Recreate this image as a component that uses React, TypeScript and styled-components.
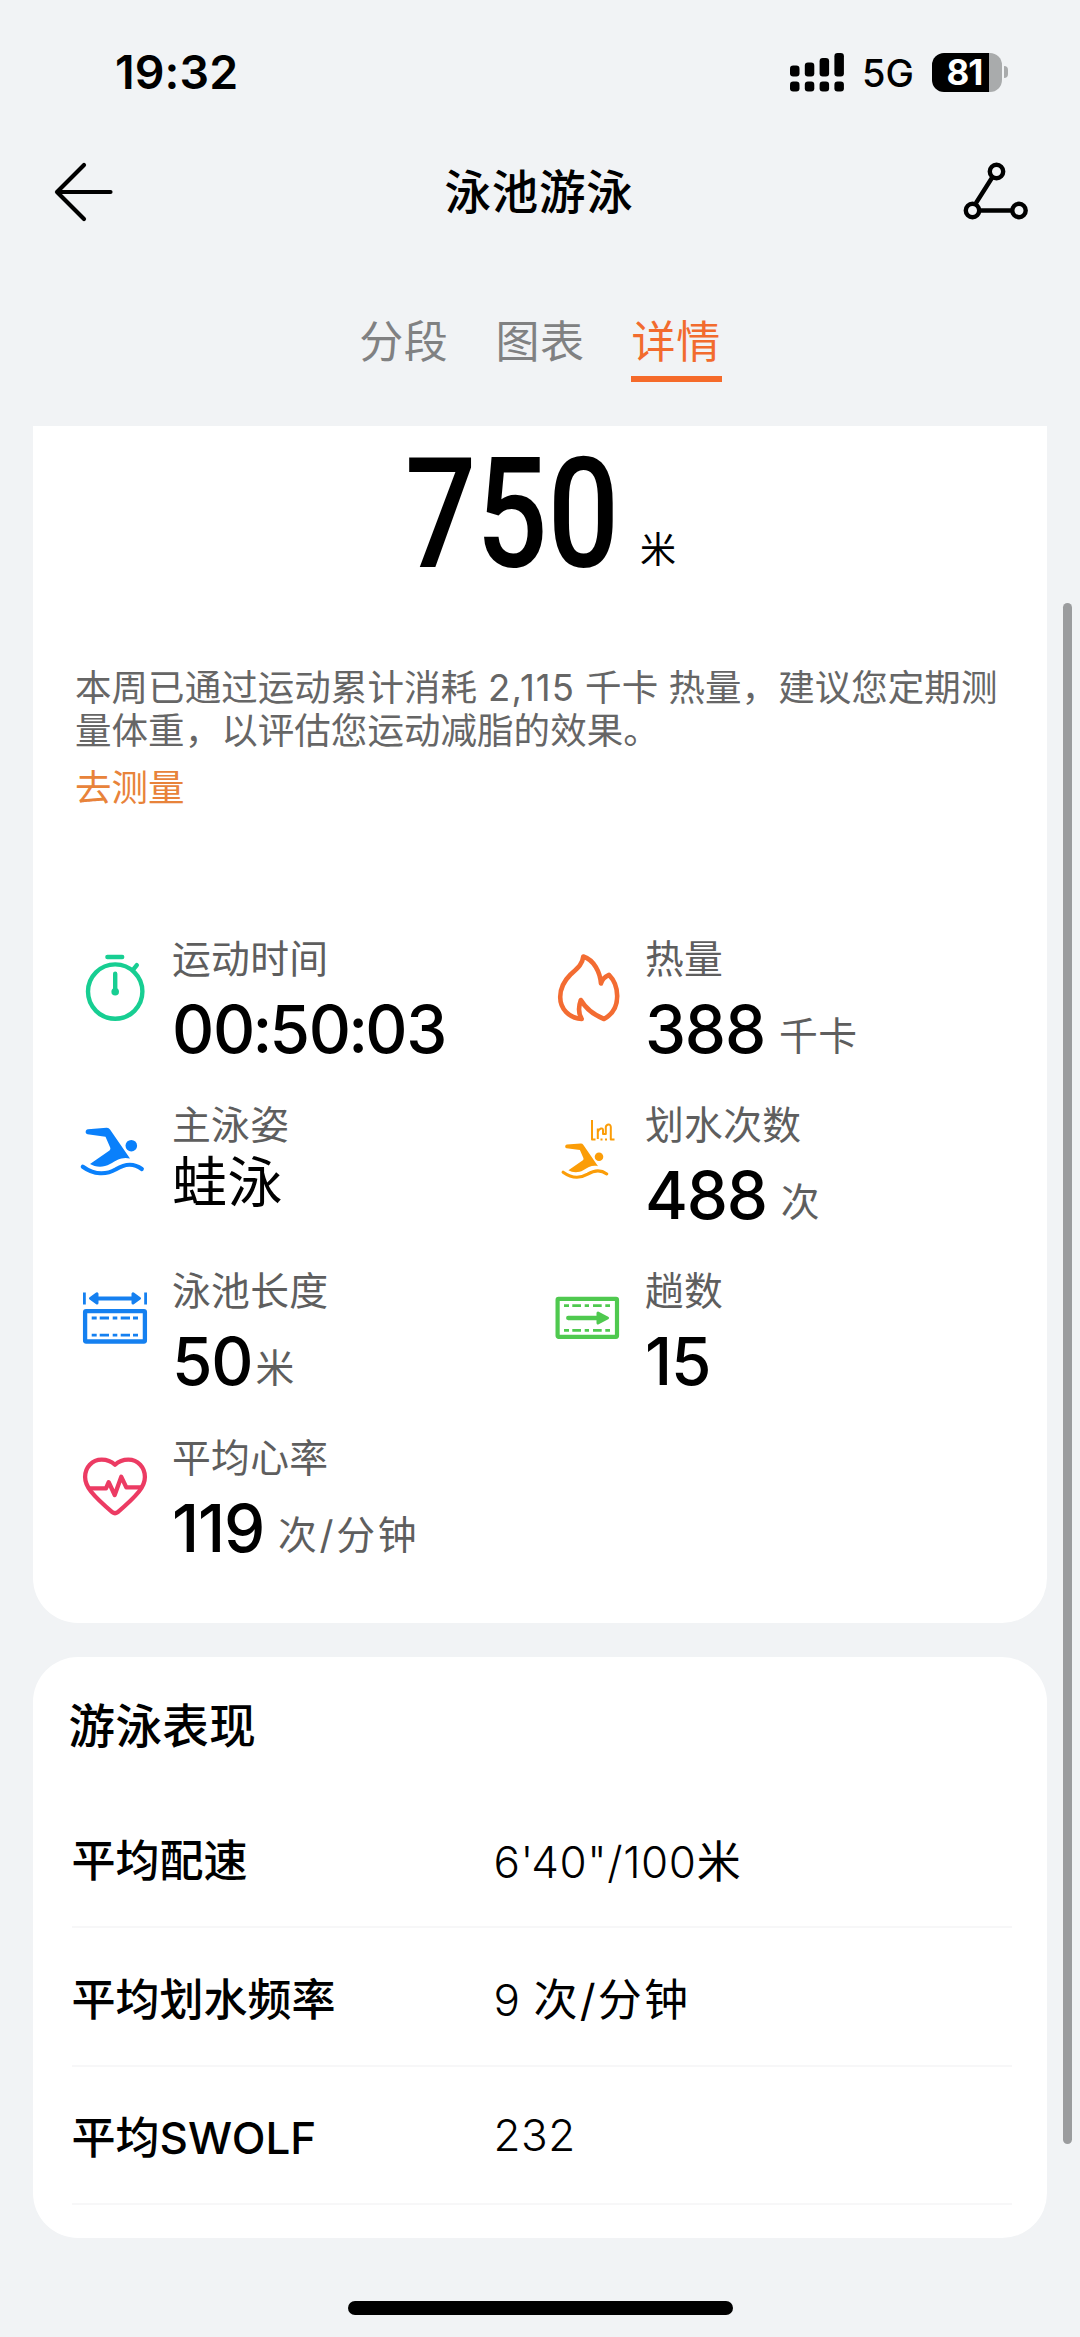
import React from 'react';
import styled, { createGlobalStyle } from 'styled-components';

const GlobalStyle = createGlobalStyle`
  * { box-sizing: border-box; }
  body {
    margin: 0;
    background: #f1f3f5;
    color: #000;
    font-family: Inter, "Noto Sans CJK SC", sans-serif;
  }
`;

const Screen = styled.div`
  position: relative;
  display: flex;
  flex-direction: column;
  width: 1080px;
  height: 2337px;
  overflow: hidden;
  background: #f1f3f5;
`;

const StatusBar = styled.header`
  display: flex;
  align-items: center;
  justify-content: space-between;
  height: 144px;
  padding: 0 72px 0 115px;
`;

const Clock = styled.div`
  font-size: 46.5px;
  font-weight: 600;
  letter-spacing: 0.1px;
`;

const StatusIcons = styled.div`
  display: flex;
  align-items: center;
`;

const Network = styled.span`
  margin: 1px 18px 0 18px;
  font-size: 38px;
  font-weight: 450;
`;

const Battery = styled.div`
  display: flex;
  align-items: center;
  gap: 2px;
`;

const BatteryBody = styled.div`
  display: flex;
  align-items: center;
  justify-content: center;
  width: 70px;
  height: 39px;
  padding-right: 5px;
  border-radius: 12px;
  background: linear-gradient(90deg, #000 57px, #a9abac 57px);
  color: #fff;
  font-size: 35px;
  font-weight: 700;
  letter-spacing: -1px;
`;

const BatteryTip = styled.div`
  width: 4px;
  height: 12px;
  border-radius: 0 4px 4px 0;
  background: #a9abac;
`;

const NavBar = styled.nav`
  display: flex;
  align-items: center;
  justify-content: space-between;
  height: 95px;
  padding: 0 52px;
`;

const IconButton = styled.button`
  display: flex;
  padding: 0;
  border: 0;
  background: none;
`;

const Title = styled.h1`
  margin: 0;
  padding-left: 2px;
  font-size: 46.5px;
  font-weight: 500;
  line-height: 60px;
  letter-spacing: 0.8px;
`;

const Tabs = styled.div`
  display: flex;
  justify-content: center;
  gap: 45px;
  height: 187px;
  padding-top: 73px;
`;

const Tab = styled.div<{ $active?: boolean }>`
  height: 70px;
  padding: 0 1px;
  border-bottom: 6px solid ${(p) => (p.$active ? '#f56a2a' : 'transparent')};
  color: ${(p) => (p.$active ? '#f26b2e' : '#808182')};
  font-size: 44px;
  font-weight: 400;
  line-height: 60px;
  letter-spacing: 0.6px;
`;

const Card = styled.section<{ $height: number; $flatTop?: boolean }>`
  flex: none;
  width: 1014px;
  height: ${(p) => p.$height}px;
  margin: 0 0 34px 33px;
  border-radius: ${(p) => (p.$flatTop ? '0 0 45px 45px' : '45px')};
  background: #fff;
`;

const Distance = styled.div`
  display: flex;
  align-items: baseline;
  height: 241px;
  padding-left: 372px;
`;

const DistanceValue = styled.span`
  display: inline-block;
  width: 235px;
  font-family: Roboto, sans-serif;
  font-size: 154px;
  font-weight: 550;
  line-height: 177px;
  transform: scaleX(0.815);
  transform-origin: 0 50%;
`;

const DistanceUnit = styled.span`
  font-size: 36px;
  transform: translateY(-4px);
`;

const Advice = styled.div`
  display: flex;
  flex-direction: column;
  padding-left: 42px;
`;

const AdviceLine = styled.div`
  display: flex;
  gap: 10px;
  color: #666;
  font-size: 36.5px;
  line-height: 42.5px;
  letter-spacing: 0.05px;
  white-space: nowrap;
`;

const AdviceNumber = styled.span`
  padding-left: 1px;
  letter-spacing: 1.1px;
`;

const MeasureLink = styled.a`
  display: block;
  margin-top: 11px;
  padding-left: 42px;
  color: #e8833a;
  font-size: 36.5px;
  line-height: 50px;
`;

const Metrics = styled.div`
  display: grid;
  grid-template-columns: 473px 473px;
  grid-auto-rows: 166.2px;
  padding: 120px 0 0 46px;
`;

const Metric = styled.div`
  display: flex;
  gap: 21px;
`;

const MetricIcon = styled.svg`
  flex: none;
  width: 72px;
  height: 72px;
  margin-top: 18.5px;
`;

const MetricText = styled.div`
  display: flex;
  flex-direction: column;
`;

const MetricLabel = styled.div`
  color: #5e5e5e;
  font-size: 38.8px;
  font-weight: 400;
  line-height: 51px;
  letter-spacing: 0.3px;
`;

const MetricValue = styled.div<{ $word?: boolean; $tight?: boolean }>`
  display: flex;
  align-items: baseline;
  gap: ${(p) => (p.$tight ? 3 : 14)}px;
  font-size: ${(p) => (p.$word ? 55 : 65.5)}px;
  font-weight: ${(p) => (p.$word ? 400 : 500)};
  line-height: ${(p) => (p.$word ? 65 : 91)}px;
  letter-spacing: ${(p) => (p.$word ? 0.5 : -1.2)}px;
`;

const Colon = styled.span`
  margin: 0 -1.7px;
`;

const Unit = styled.span<{ $wide?: boolean }>`
  color: #5e5e5e;
  font-size: 38.8px;
  font-weight: 400;
  letter-spacing: ${(p) => (p.$wide ? 2.7 : 0.6)}px;
  transform: translateY(-3px);
`;

const SectionTitle = styled.h2`
  height: 133px;
  margin: 0;
  padding: 39px 0 0 35.5px;
  font-size: 46.5px;
  font-weight: 500;
  line-height: 60px;
  letter-spacing: 0.4px;
`;

const StatRow = styled.div`
  display: flex;
  align-items: center;
  height: 138.4px;
  margin: 0 35px 0 38.5px;
  border-bottom: 2px solid #f7f7f8;
`;

const StatLabel = styled.div`
  width: 422px;
  font-size: 44px;
  font-weight: 500;
`;

const StatValue = styled.div`
  padding-top: 1px;
  font-size: 44px;
  font-weight: 350;
  letter-spacing: 0.6px;
  white-space: pre;
`;

const StatUnit = styled.span`
  font-weight: 400;
  letter-spacing: 2.2px;
`;

const ScrollThumb = styled.div`
  position: absolute;
  top: 603px;
  right: 8px;
  width: 9px;
  height: 1541px;
  border-radius: 5px;
  background: #9b9c9e;
`;

const HomeIndicator = styled.div`
  flex: none;
  width: 385px;
  height: 14px;
  margin: 29px auto 0 348px;
  border-radius: 7px;
  background: #000;
`;

const SignalIcon = () => (
  <svg width="54" height="39" viewBox="0 0 54 39">
    {[12.5, 9.5, 5, 0].map((top, i) => (
      <g key={top}>
        <rect x={i * 14.8} y={top} width="9.5" height={23.5 - top} rx="3.2" />
        <rect x={i * 14.8} y="28.5" width="9.5" height="10" rx="3.2" />
      </g>
    ))}
  </svg>
);

const BackIcon = () => (
  <svg width="62" height="62" viewBox="0 0 62 62" fill="none" stroke="#000" strokeWidth="4.2" strokeLinecap="round" strokeLinejoin="round">
    <path d="M58.5 31H5M32 4L5 31L32 58" />
  </svg>
);

const RouteIcon = () => (
  <svg width="66" height="60" viewBox="0 0 66 60" fill="none" stroke="#000" strokeWidth="4.4">
    <path d="M30.5 15L14 41M18 48.5H49" />
    <circle cx="34.5" cy="9.5" r="6.7" />
    <circle cx="10.5" cy="48.5" r="6.7" />
    <circle cx="57" cy="48.5" r="6.7" />
  </svg>
);

const Stopwatch = () => (
  <MetricIcon viewBox="0 0 72 72" fill="none" stroke="#17ce92" strokeWidth="4.4" strokeLinecap="round">
    <circle cx="36.2" cy="39.6" r="27.2" />
    <path d="M28.4 5H43.2M54 17.8L57.8 13.2M36.2 21.8V39" />
    <circle cx="36.2" cy="39.8" r="3.8" fill="#17ce92" stroke="none" />
  </MetricIcon>
);

const Flame = () => (
  <MetricIcon viewBox="0 0 72 72" fill="none" stroke="#f36c32" strokeWidth="4.6" strokeLinejoin="round">
    <path d="M31.3 4.5C30.5 12.5 25 16.5 18.5 22.5C12 29 8.2 37 8.2 45C8.2 57 17 66 29.7 67C25.5 60 27 53 28.8 48C34 57 41 62.5 52 67C61 62 65.2 54 65.2 44C65.2 36 62 28 57 22.9C53.5 24.5 50 27 49 31.5C48 20 42 8 31.3 4.5Z" />
  </MetricIcon>
);

const SwimmerShape = () => (
  <>
    <path d="M9 11.2L27.5 9.8Q29.8 9.6 31 11.4L51 40.5C43 38.5 38 42 31 46C24 50 16 49 11 46L30.5 32.5Q32 31.2 31.2 29.5L26.5 18.8L8.5 16.2C5.8 15.6 6.2 11.5 9 11.2Z" />
    <circle cx="52.3" cy="27.7" r="5.8" />
    <path d="M3.8 48.7C15 56.8 27 57 37 51.3C46 45.8 54 44.5 62.8 51" fill="none" stroke="currentColor" strokeWidth="4.2" strokeLinecap="round" />
  </>
);

const Swimmer = () => (
  <MetricIcon viewBox="0 0 72 72" fill="currentColor" color="#0a80fb">
    <SwimmerShape />
  </MetricIcon>
);

const Strokes = () => (
  <MetricIcon viewBox="0 0 72 72" fill="currentColor" color="#fb9d08">
    <g transform="translate(8.3 18.2) scale(0.74)">
      <SwimmerShape />
    </g>
    <g fill="none" stroke="currentColor" strokeWidth="2" strokeLinejoin="round">
      <path d="M40 2V21.5H43.5M45.8 21V10.5M45.8 14C47 10 51 9.5 51 12V16H53.8V9C54.5 6 58.8 5.5 58.8 9V21.5H62.5" />
      <path d="M48.5 21.5H50.5M53 21.5H55" />
    </g>
  </MetricIcon>
);

const PoolLength = () => (
  <MetricIcon viewBox="0 0 72 72" fill="none" stroke="#1580f0">
    <path d="M5.4 8.5V20.5M66.6 8.5V20.5" strokeWidth="2.8" />
    <path d="M16 14.4H56" strokeWidth="4" />
    <path d="M11.5 14.4L18 9.8V19ZM60.5 14.4L54 9.8V19Z" strokeWidth="3" strokeLinejoin="round" fill="#1580f0" />
    <rect x="6.1" y="27.1" width="59.8" height="30.4" rx="1" strokeWidth="4.3" />
    <path d="M12.7 34H17.7M20.7 34H30M33.7 34H38.3M41.7 34H51M54 34H59M12.7 51.2H17.7M20.7 51.2H30M33.7 51.2H38.3M41.7 51.2H51M54 51.2H59" strokeWidth="2.8" />
  </MetricIcon>
);

const Laps = () => (
  <MetricIcon viewBox="0 0 72 72" fill="none" stroke="#4fc94f">
    <rect x="5.6" y="14.9" width="59.4" height="37.9" rx="1" strokeWidth="4.2" />
    <path d="M12 21.6H17M20.3 21.6H29M32.7 21.6H37M41 21.6H49.7M53.3 21.6H58M12 46.3H17M20.3 46.3H29M32.7 46.3H37M41 46.3H49.7M53.3 46.3H58" strokeWidth="2.8" />
    <path d="M16.2 34H46" strokeWidth="4.3" strokeLinecap="round" />
    <path d="M46 29L55.5 34L46 39Z" strokeWidth="3" strokeLinejoin="round" fill="#4fc94f" />
  </MetricIcon>
);

const HeartRate = () => (
  <MetricIcon viewBox="0 0 72 72" fill="none" stroke="#ec3b63" strokeWidth="4.3" strokeLinejoin="round">
    <path d="M36 14.8C32 11 27.5 9.7 22.7 9.7C13 9.7 6.1 17.5 6.1 27C6.1 33.5 8.5 37 12 41.5C18 49 26 56 33.5 62.3Q36 64.2 38.5 62.3C46 56 54 49 60 41.5C63.5 37 65.9 33.5 65.9 27C65.9 17.5 59 9.7 49.3 9.7C44.5 9.7 40 11 36 14.8Z" />
    <path d="M9.5 38.4H27L29.7 32.2L35.7 45L42.3 26.8L47.3 37.4H62.5" />
  </MetricIcon>
);

type MetricData = {
  icon: React.ReactNode;
  label: string;
  value: React.ReactNode;
  unit?: string;
  word?: boolean;
  tight?: boolean;
  wideUnit?: boolean;
};

const metrics: MetricData[] = [
  {
    icon: <Stopwatch />,
    label: '运动时间',
    value: (
      <span>
        00<Colon>:</Colon>50<Colon>:</Colon>03
      </span>
    ),
  },
  { icon: <Flame />, label: '热量', value: '388', unit: '千卡' },
  { icon: <Swimmer />, label: '主泳姿', value: '蛙泳', word: true },
  { icon: <Strokes />, label: '划水次数', value: '488', unit: '次' },
  { icon: <PoolLength />, label: '泳池长度', value: '50', unit: '米', tight: true },
  { icon: <Laps />, label: '趟数', value: '15' },
  { icon: <HeartRate />, label: '平均心率', value: '119', unit: '次/分钟', wideUnit: true },
];

const stats = [
  { label: '平均配速', value: '6\'40"/100', unit: '米' },
  { label: '平均划水频率', value: '9 ', unit: '次/分钟' },
  { label: '平均SWOLF', value: '232' },
];

export default function App() {
  return (
    <>
      <GlobalStyle />
      <Screen>
        <StatusBar>
          <Clock>19:32</Clock>
          <StatusIcons>
            <SignalIcon />
            <Network>5G</Network>
            <Battery>
              <BatteryBody>81</BatteryBody>
              <BatteryTip />
            </Battery>
          </StatusIcons>
        </StatusBar>
        <NavBar>
          <IconButton aria-label="返回"><BackIcon /></IconButton>
          <Title>泳池游泳</Title>
          <IconButton aria-label="轨迹"><RouteIcon /></IconButton>
        </NavBar>
        <Tabs>
          <Tab>分段</Tab>
          <Tab>图表</Tab>
          <Tab $active>详情</Tab>
        </Tabs>
        <Card $height={1197} $flatTop>
          <Distance>
            <DistanceValue>750</DistanceValue>
            <DistanceUnit>米</DistanceUnit>
          </Distance>
          <Advice>
            <AdviceLine>
              <span>本周已通过运动累计消耗</span>
              <AdviceNumber>2,115</AdviceNumber>
              <span>千卡 热量，建议您定期测</span>
            </AdviceLine>
            <AdviceLine>量体重，以评估您运动减脂的效果。</AdviceLine>
          </Advice>
          <MeasureLink>去测量</MeasureLink>
          <Metrics>
            {metrics.map((m) => (
              <Metric key={m.label}>
                {m.icon}
                <MetricText>
                  <MetricLabel>{m.label}</MetricLabel>
                  <MetricValue $word={m.word} $tight={m.tight}>
                    {m.value}
                    {m.unit && <Unit $wide={m.wideUnit}>{m.unit}</Unit>}
                  </MetricValue>
                </MetricText>
              </Metric>
            ))}
          </Metrics>
        </Card>
        <Card $height={581}>
          <SectionTitle>游泳表现</SectionTitle>
          {stats.map((s) => (
            <StatRow key={s.label}>
              <StatLabel>{s.label}</StatLabel>
              <StatValue>
                {s.value}
                {s.unit && <StatUnit>{s.unit}</StatUnit>}
              </StatValue>
            </StatRow>
          ))}
        </Card>
        <HomeIndicator />
        <ScrollThumb />
      </Screen>
    </>
  );
}
